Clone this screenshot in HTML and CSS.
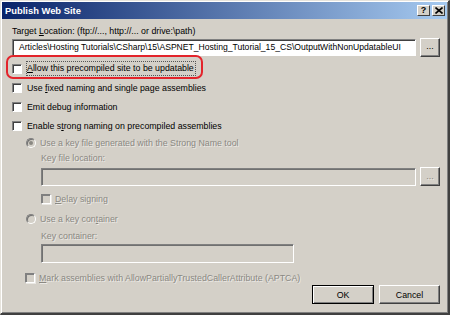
FILE: index.html
```html
<!DOCTYPE html>
<html lang="en">

<head>
    <meta charset="UTF-8">
    <meta name="viewport" content="width=device-width, initial-scale=1.0">
    <title>Publish Web Site</title>
    <link rel="stylesheet" href="styles.css">
</head>

<body>
    <div class="window">
        <div class="titlebar">
            <span class="title">Publish Web Site</span>
            <div class="caption-btns">
                <span class="cap-btn">?</span>
                <span class="cap-btn close">
                    <svg width="8" height="7" viewBox="0 0 8 7"><path d="M0.5 0.5 L7.5 6.5 M7.5 0.5 L0.5 6.5" stroke="#000" stroke-width="1.6"/></svg>
                </span>
            </div>
        </div>
        <div class="content">
            <div class="label">Target <u>L</u>ocation: (ftp://..., http://... or drive:\path)</div>
            <div class="path-row">
                <div class="textbox">Articles\Hosting Tutorials\CSharp\15\ASPNET_Hosting_Tutorial_15_CS\OutputWithNonUpdatableUI</div>
                <div class="btn browse">...</div>
            </div>

            <div class="check-row first">
                <span class="box"></span>
                <span class="focus"><u>A</u>llow this precompiled site to be updatable</span>
                <div class="callout"></div>
            </div>
            <div class="check-row">
                <span class="box"></span>
                <span>Use <u>f</u>ixed naming and single page assemblies</span>
            </div>
            <div class="check-row">
                <span class="box"></span>
                <span>Emit debu<u>g</u> information</span>
            </div>
            <div class="check-row">
                <span class="box"></span>
                <span>Enable s<u>t</u>rong naming on precompiled assemblies</span>
            </div>

            <div class="group disabled">
                <div class="radio-row">
                    <span class="radio checked"></span>
                    <span>Use a key file generated with the Strong Name tool</span>
                </div>
                <div class="sub">
                    <div class="sub-label">Key file location:</div>
                    <div class="path-row key-row">
                        <div class="textbox off"></div>
                        <div class="btn browse">...</div>
                    </div>
                    <div class="check-row delay">
                        <span class="box off"></span>
                        <span><u>D</u>elay signing</span>
                    </div>
                </div>
                <div class="radio-row second">
                    <span class="radio"></span>
                    <span>Use a key con<u>t</u>ainer</span>
                </div>
                <div class="sub">
                    <div class="sub-label">Key container:</div>
                    <div class="textbox off short"></div>
                </div>
                <div class="check-row mark">
                    <span class="box off"></span>
                    <span><u>M</u>ark assemblies with AllowPartiallyTrustedCallerAttribute (APTCA)</span>
                </div>
            </div>

            <div class="actions">
                <div class="btn default">OK</div>
                <div class="btn cancel">Cancel</div>
            </div>
        </div>
    </div>
</body>

</html>
```

FILE: styles.css
```css
* {
    padding: 0;
    margin: 0;
    box-sizing: border-box;
}

body {
    font-family: "Liberation Sans", Arial, sans-serif;
    font-size: 8.8px;
    color: #000;
    background: #d4d0c8;
}

.window {
    width: 450px;
    height: 315px;
    background: #d4d0c8;
    border-top: 1px solid #e6e3dc;
    border-left: 1px solid #e6e3dc;
    border-right: 2px solid #404040;
    border-bottom: 2px solid #404040;
    box-shadow: inset 1px 1px 0 #fff, inset -1px -1px 0 #808080;
    padding: 1px 0 0 1px;
}

.titlebar {
    height: 17px;
    margin-right: 1px;
    display: flex;
    align-items: center;
    justify-content: space-between;
    background: linear-gradient(to right, #0a246a, #a6caf0);
    padding: 0 2px 0 3px;
}

.title {
    color: #fff;
    font-weight: bold;
    font-size: 9.4px;
}

.caption-btns {
    display: flex;
    gap: 2px;
}

.cap-btn {
    width: 13px;
    height: 11px;
    background: #d4d0c8;
    border-top: 1px solid #fff;
    border-left: 1px solid #fff;
    border-right: 1px solid #404040;
    border-bottom: 1px solid #404040;
    font-weight: bold;
    font-size: 9px;
    line-height: 9px;
    text-align: center;
    display: flex;
    align-items: center;
    justify-content: center;
}

.content {
    padding: 0 8px 0 10px;
    display: flex;
    flex-direction: column;
}

.label {
    height: 12px;
    line-height: 12px;
    margin-top: 6px;
}

.path-row {
    display: flex;
    align-items: center;
    gap: 4px;
    height: 18px;
    margin-top: 1px;
}

.textbox {
    flex: 1;
    height: 17px;
    background: #fff;
    border-top: 1px solid #808080;
    border-left: 1px solid #808080;
    border-right: 1px solid #fff;
    border-bottom: 1px solid #fff;
    box-shadow: inset 1px 1px 0 #404040;
    padding: 0 4px 0 6px;
    font-size: 8.6px;
    line-height: 15px;
    white-space: nowrap;
    overflow: hidden;
}

.textbox.off {
    background: #d4d0c8;
    height: 19px;
    box-shadow: inset 1px 1px 0 #707070;
}

.textbox.short {
    flex: none;
    width: 253px;
}

.btn {
    height: 19px;
    background: #d4d0c8;
    border-top: 1px solid #fff;
    border-left: 1px solid #fff;
    border-right: 1px solid #404040;
    border-bottom: 1px solid #404040;
    box-shadow: inset -1px -1px 0 #808080;
    display: flex;
    align-items: center;
    justify-content: center;
}

.browse {
    width: 20px;
    padding-bottom: 2px;
}

.check-row {
    position: relative;
    display: flex;
    align-items: center;
    height: 19px;
    gap: 5px;
}

.check-row.first {
    margin-top: 3px;
}

.box {
    width: 10px;
    height: 10px;
    background: #fff;
    border-top: 1px solid #808080;
    border-left: 1px solid #808080;
    border-right: 1px solid #fff;
    border-bottom: 1px solid #fff;
    box-shadow: inset 1px 1px 0 #404040;
}

.box.off {
    background: #d4d0c8;
    box-shadow: inset 1px 1px 0 #808080, 1px 1px 0 rgba(255, 255, 255, 0.5);
}

.focus {
    outline: 1px dotted #555;
    outline-offset: 0;
    padding: 1px 1px 2px 0;
}

/* red annotation drawn over the first option */
.callout {
    position: absolute;
    left: -6px;
    top: -4px;
    width: 197px;
    height: 24px;
    border: 2px solid #e3242b;
    border-radius: 7px;
}

.disabled {
    color: #8a8882;
    text-shadow: 1px 1px 0 rgba(255, 255, 255, 0.55);
}

.group {
    display: flex;
    flex-direction: column;
}

.radio-row {
    display: flex;
    align-items: center;
    height: 15px;
    gap: 4px;
    padding-left: 14px;
}

.radio-row.second {
    height: 18px;
    margin-top: 2px;
}

.radio {
    position: relative;
    width: 10px;
    height: 10px;
    border-radius: 50%;
    background: #d4d0c8;
    border: 1px solid;
    border-color: #808080 #fff #fff #808080;
    box-shadow: inset 1px 1px 0 #707070;
}

.radio.checked::after {
    content: "";
    position: absolute;
    left: 2px;
    top: 2px;
    width: 4px;
    height: 4px;
    border-radius: 50%;
    background: #8a8882;
}

.sub {
    padding-left: 29px;
    display: flex;
    flex-direction: column;
}

.sub-label {
    height: 15px;
    line-height: 15px;
    margin-top: 1px;
}

.key-row {
    height: 20px;
    margin-top: 1px;
    align-items: flex-start;
}

.key-row .textbox {
    margin-top: 1px;
    height: 18px;
}

.key-row .browse {
    color: #8a8882;
}

.check-row.delay {
    height: 18px;
    margin-top: 3px;
    gap: 4px;
}

.check-row.mark {
    padding-left: 13px;
    height: 14px;
    margin-top: 8px;
    gap: 4px;
}

.actions {
    display: flex;
    justify-content: flex-end;
    gap: 5px;
}

.actions .btn {
    height: 19px;
}

.default {
    width: 62px;
    outline: 1px solid #000;
    outline-offset: -1px;
    border-top-color: #000;
    border-left-color: #000;
    box-shadow: inset 1px 1px 0 #fff, inset -1px -1px 0 #808080;
}

.cancel {
    width: 61px;
}
```
